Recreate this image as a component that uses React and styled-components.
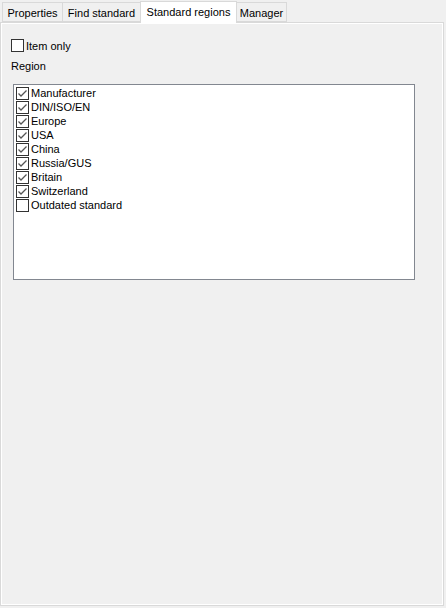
import React from "react";
import styled, { createGlobalStyle } from "styled-components";

const GlobalStyles = createGlobalStyle`
  html, body {
    margin: 0;
    padding: 0;
    background: #f0f0f0;
  }
  body {
    font-family: "Liberation Sans", Arial, sans-serif;
    font-size: 11px;
    color: #000;
  }
`;

const Window = styled.div`
  width: 446px;
  height: 608px;
  box-sizing: border-box;
  padding: 0 2px 2px 0;
  display: flex;
  flex-direction: column;
`;

const TabStrip = styled.div`
  display: flex;
  align-items: flex-end;
  height: 22px;
  padding-left: 2px;
  position: relative;
  z-index: 1;
`;

const Tab = styled.div`
  box-sizing: border-box;
  height: ${({ $active }) => ($active ? "22px" : "20px")};
  margin-bottom: ${({ $active }) => ($active ? "-1px" : "0")};
  width: ${({ $w }) => $w}px;
  border: 1px solid #d9d9d9;
  border-bottom: ${({ $active }) => ($active ? "none" : "1px solid #d9d9d9")};
  margin-left: -1px;
  background: ${({ $active }) => ($active ? "#fff" : "#f0f0f0")};
  display: flex;
  align-items: center;
  justify-content: center;
  padding-top: ${({ $active }) => ($active ? "0" : "1px")};
  padding-bottom: ${({ $active }) => ($active ? "2px" : "0")};
  white-space: nowrap;
  &:first-child {
    margin-left: 0;
  }
`;

const Panel = styled.div`
  flex: 1;
  box-sizing: border-box;
  border: 1px solid #d9d9d9;
  box-shadow: inset 0 0 0 1px #fff;
  background: #f0f0f0;
  padding: 15px 0 0 10px;
  display: flex;
  flex-direction: column;
`;

const CheckRow = styled.label`
  display: flex;
  align-items: center;
  height: ${({ $h }) => $h || 14}px;
  gap: 2px;
  white-space: nowrap;
`;

const Box = styled.span`
  box-sizing: border-box;
  width: 13px;
  height: 13px;
  border: 1px solid #333;
  background: #fff;
  display: inline-flex;
  align-items: center;
  justify-content: center;
  flex-shrink: 0;
`;

const SectionLabel = styled.div`
  margin-top: 6px;
  height: 14px;
  line-height: 14px;
`;

const ListBox = styled.div`
  box-sizing: border-box;
  margin: 11px 0 0 2px;
  width: 402px;
  height: 196px;
  border: 1px solid #828790;
  background: #fff;
  padding: 1px 0 0 2px;
  display: flex;
  flex-direction: column;
`;

function Check({ checked }) {
  return (
    <Box>
      {checked && (
        <svg width="11" height="11" viewBox="0 0 11 11">
          <path d="M1.5 5.5 L4 8 L9.5 2.5" fill="none" stroke="#555" strokeWidth="1.3" />
        </svg>
      )}
    </Box>
  );
}

const tabs = [
  { label: "Properties", w: 61 },
  { label: "Find standard", w: 79 },
  { label: "Standard regions", w: 97, active: true },
  { label: "Manager", w: 51 },
];

const regions = [
  ["Manufacturer", true],
  ["DIN/ISO/EN", true],
  ["Europe", true],
  ["USA", true],
  ["China", true],
  ["Russia/GUS", true],
  ["Britain", true],
  ["Switzerland", true],
  ["Outdated standard", false],
];

export default function App() {
  return (
    <>
      <GlobalStyles />
      <Window>
        <TabStrip>
          {tabs.map((t) => (
            <Tab key={t.label} $w={t.w} $active={t.active}>
              {t.label}
            </Tab>
          ))}
        </TabStrip>
        <Panel>
          <CheckRow $h={15}>
            <Check checked={false} />
            Item only
          </CheckRow>
          <SectionLabel>Region</SectionLabel>
          <ListBox>
            {regions.map(([name, on]) => (
              <CheckRow key={name}>
                <Check checked={on} />
                {name}
              </CheckRow>
            ))}
          </ListBox>
        </Panel>
      </Window>
    </>
  );
}
